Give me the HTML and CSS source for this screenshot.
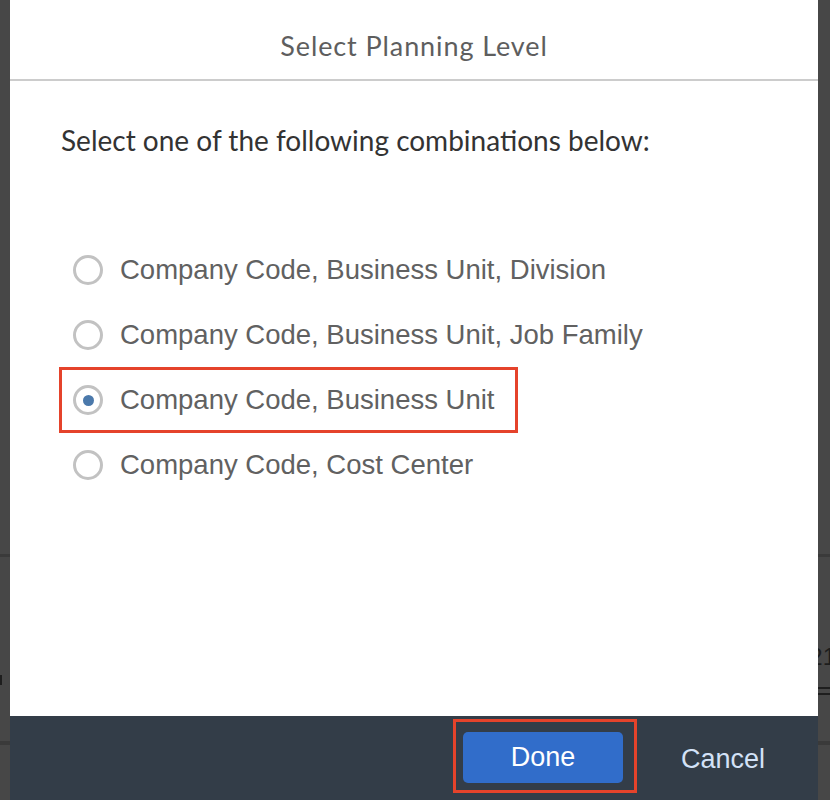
FILE: index.html
```html
<!DOCTYPE html>
<html lang="en">
<head>
<meta charset="utf-8">
<title>Select Planning Level</title>
<link rel="stylesheet" href="styles.css">
</head>
<body>
<div class="backdrop">
  <div class="bg-row bg-row-a"></div>
  <div class="bg-row bg-row-b">
    <span class="bg-mark"></span>
    <span class="bg-year">2021</span>
  </div>
  <div class="bg-row bg-row-c">
    <span class="bg-eq"></span>
  </div>
  <div class="bg-row bg-row-d"></div>
  <div class="bg-row bg-row-e"></div>
</div>

<div class="dialog" role="dialog" aria-labelledby="dlg-title">
  <header class="dialog-header">
    <h1 id="dlg-title" class="dialog-title">Select Planning Level</h1>
  </header>
  <main class="dialog-body">
    <p class="intro">Select one of the following combinations below:</p>
    <div class="options" role="radiogroup">
      <label class="option">
        <span class="radio"></span>
        <span class="option-text">Company Code, Business Unit, Division</span>
      </label>
      <label class="option">
        <span class="radio"></span>
        <span class="option-text">Company Code, Business Unit, Job Family</span>
      </label>
      <label class="option option-selected">
        <span class="radio radio-on"><span class="radio-dot"></span></span>
        <span class="option-text">Company Code, Business Unit</span>
      </label>
      <label class="option">
        <span class="radio"></span>
        <span class="option-text">Company Code, Cost Center</span>
      </label>
    </div>
  </main>
  <footer class="dialog-footer">
    <span class="highlight-box"><button class="btn btn-primary" type="button">Done</button></span>
    <button class="btn btn-link" type="button">Cancel</button>
  </footer>
</div>
</body>
</html>
```

FILE: styles.css
```css
html, body {
  margin: 0;
  padding: 0;
}

body {
  width: 830px;
  height: 800px;
  overflow: hidden;
  background: #474747;
  font-family: "Liberation Sans", Arial, sans-serif;
  position: relative;
}

/* page behind the modal */
.backdrop {
  display: flex;
  flex-direction: column;
  padding-top: 554px;
}

.bg-row {
  position: relative;
}

.bg-row-a { height: 0; border-top: 3px solid #3a3a3a; }
.bg-row-b { height: 128px; display: flex; justify-content: space-between; align-items: flex-end; }
.bg-row-c { height: 56px; }
.bg-row-d { height: 40px; border-top: 4px solid #3a3a3a; }
.bg-row-e { height: 10px; }

.bg-mark {
  width: 2px;
  height: 10px;
  background: #1e1e1e;
  align-self: flex-end;
}

.bg-year {
  font-family: "Liberation Sans", Arial, sans-serif;
  font-size: 24px;
  line-height: 24px;
  color: #1d1d1d;
  margin-right: -6px;
  align-self: center;
  transform: translateY(36px);
}

.bg-eq {
  position: absolute;
  right: 0;
  top: 2px;
  width: 12px;
  height: 4px;
  border-top: 2px solid #1e1e1e;
  border-bottom: 2px solid #1e1e1e;
}

/* modal */
.dialog {
  position: absolute;
  left: 10px;
  top: 0;
  width: 808px;
  height: 800px;
  background: #ffffff;
  display: flex;
  flex-direction: column;
}

.dialog-header {
  height: 79px;
  border-bottom: 2px solid #cccccc;
  display: flex;
  align-items: center;
  justify-content: center;
}

.dialog-title {
  margin: 0;
  padding-top: 12px;
  font-family: Lato, "Liberation Sans", sans-serif;
  font-weight: 400;
  font-size: 27px;
  letter-spacing: 0.9px;
  color: #5e5e5e;
}

.dialog-body {
  flex: 1;
  padding: 0 0 0 52px;
}

.intro {
  margin: 42px 0 0 -1px;
  font-family: Lato, "Liberation Sans", sans-serif;
  font-size: 28px;
  line-height: 34px;
  color: #333333;
}

.options {
  margin-top: 83px;
  display: flex;
  flex-direction: column;
  align-items: flex-start;
  gap: 5px;
}

.option {
  height: 60px;
  display: flex;
  align-items: center;
  padding: 0 20px 0 11px;
  gap: 17px;
  cursor: pointer;
}

.option-selected {
  outline: 3px solid #e5432b;
}

.radio {
  box-sizing: border-box;
  width: 30px;
  height: 30px;
  border: 3px solid #c2c2c2;
  border-radius: 50%;
  display: flex;
  align-items: center;
  justify-content: center;
  flex-shrink: 0;
}

.radio-dot {
  width: 11px;
  height: 11px;
  border-radius: 50%;
  background: #4b79ab;
}

.option-text {
  font-family: "Liberation Sans", Arial, sans-serif;
  font-size: 27.5px;
  color: #616161;
  white-space: nowrap;
}

.dialog-footer {
  height: 84px;
  background: #333d48;
  display: flex;
  align-items: flex-start;
  justify-content: flex-end;
  padding: 3px 53px 0 0;
  box-sizing: border-box;
}

.highlight-box {
  display: inline-flex;
  border: 3px solid #e5432b;
  padding: 10px 11px 7px 7px;
}

.btn {
  font-family: "Liberation Sans", Arial, sans-serif;
  font-size: 27px;
  border: 0;
  cursor: pointer;
}

.btn-primary {
  width: 160px;
  height: 51px;
  background: #316dca;
  color: #ffffff;
  border-radius: 5px;
  padding: 0;
}

.btn-link {
  align-self: center;
  background: transparent;
  color: #d3e2f7;
  padding: 0;
  margin-left: 44px;
}
```
